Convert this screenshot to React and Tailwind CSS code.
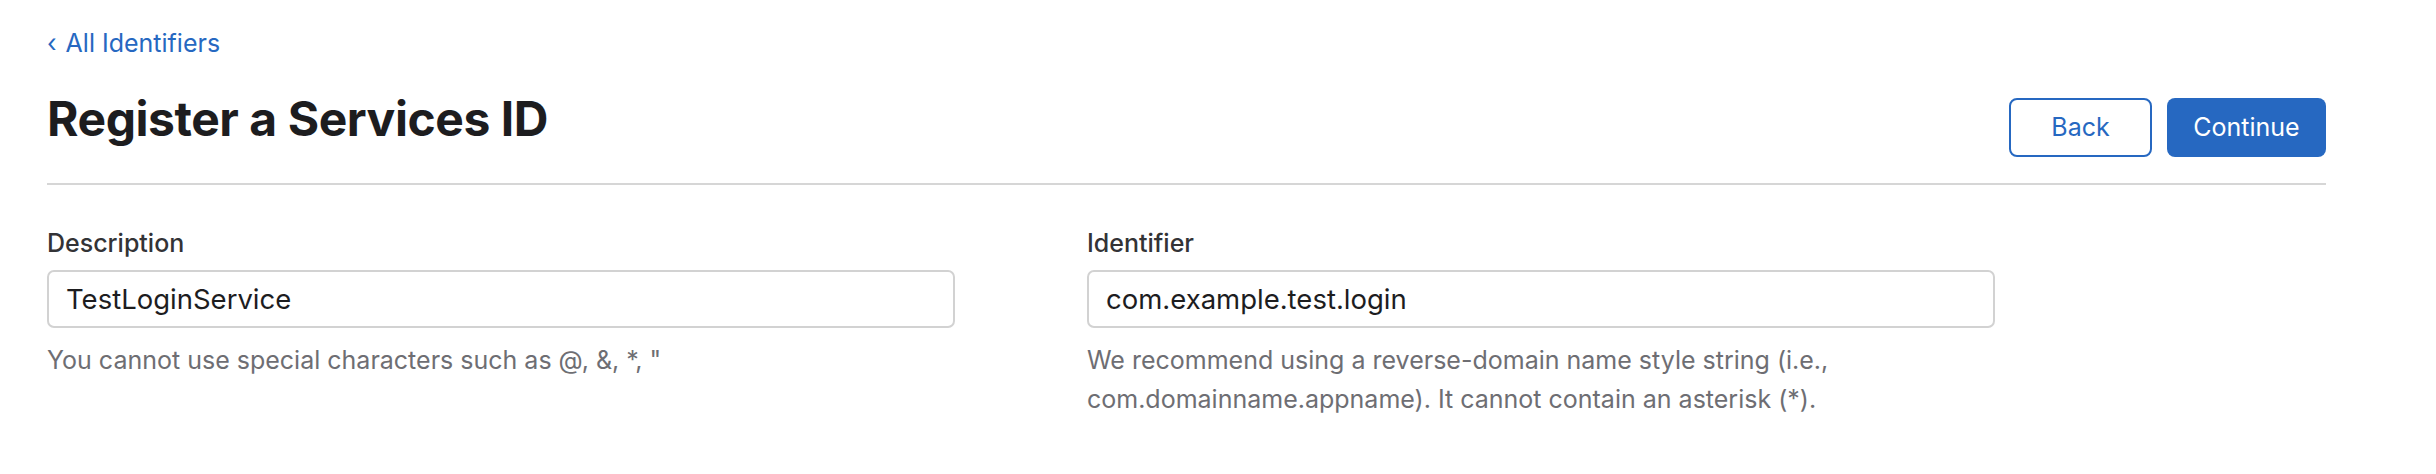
import { useState } from "react";

function Field({ label, value, onChange, hint }) {
  return (
    <div className="flex flex-col">
      <label className="text-[25px] leading-[38px] font-medium text-[#333336]">{label}</label>
      <input
        type="text"
        value={value}
        onChange={(e) => onChange(e.target.value)}
        className="mt-[8px] w-[908px] h-[58px] px-[17px] rounded-[7px] border-2 border-[#d2d2d2] bg-white text-[27.5px] text-[#1d1d1f] outline-none"
      />
      <p className="mt-[13px] text-[25px] leading-[39px] text-[#6e6e73]">{hint}</p>
    </div>
  );
}

export default function App() {
  const [description, setDescription] = useState("TestLoginService");
  const [identifier, setIdentifier] = useState("com.example.test.login");

  return (
    <div className="min-h-screen bg-white pl-[47px] pr-[110px] pt-[24px] font-['Inter','Liberation_Sans',sans-serif]">
      <a href="#" className="block text-[25px] leading-[38px] text-[#2668c1]">
        <span className="mr-[9px]">‹</span>All Identifiers
      </a>

      <div className="mt-[33px] flex items-start justify-between">
        <h1 className="text-[48px] leading-[48px] font-bold text-[#1d1d1f] tracking-[-0.45px]">
          Register a Services ID
        </h1>
        <div className="mt-[3px] flex gap-[15px]">
          <button className="w-[143px] h-[59px] rounded-[8px] border-2 border-[#2668c1] bg-white text-[25px] text-[#2668c1]">
            Back
          </button>
          <button className="w-[159px] h-[59px] rounded-[8px] bg-[#2668c1] text-[25px] text-white">
            Continue
          </button>
        </div>
      </div>

      <div className="mt-[26px] h-[2px] bg-[#d6d6d6]" />

      <div className="mt-[39px] flex">
        <div className="w-[1040px]">
          <Field
            label="Description"
            value={description}
            onChange={setDescription}
            hint={'You cannot use special characters such as @, &, *, "'}
          />
        </div>
        <div>
          <Field
            label="Identifier"
            value={identifier}
            onChange={setIdentifier}
            hint={
              <>
                We recommend using a reverse-domain name style string (i.e.,
                <br />
                com.domainname.appname). It cannot contain an asterisk (*).
              </>
            }
          />
        </div>
      </div>
    </div>
  );
}
